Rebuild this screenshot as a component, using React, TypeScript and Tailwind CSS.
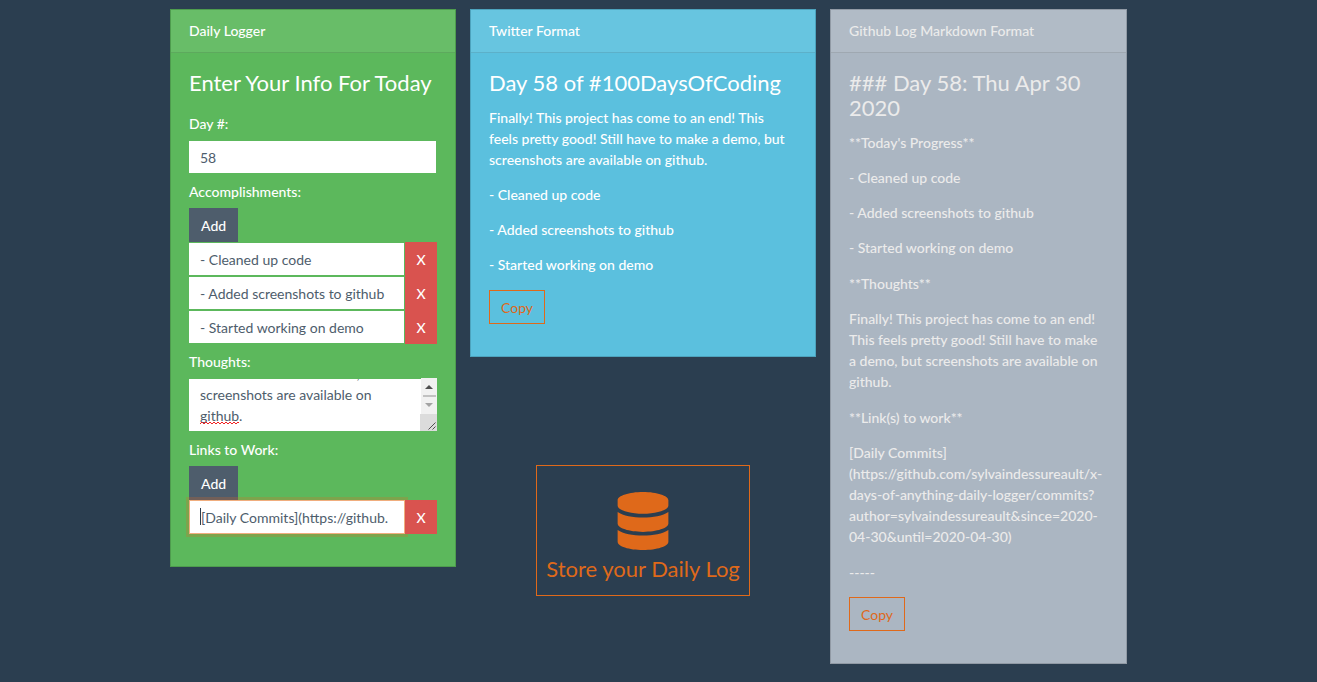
import { useEffect, useRef, useState } from "react";
import type { ReactNode } from "react";
import { FaDatabase } from "react-icons/fa";

const accomplishments = [
  "- Cleaned up code",
  "- Added screenshots to github",
  "- Started working on demo",
];

const initialThoughts =
  "Finally! This project has come to an end! This feels pretty good! Still have to make a demo, but screenshots are available on github.";

const link =
  "[Daily Commits](https://github.com/sylvaindessureault/x-days-of-anything-daily-logger/commits?author=sylvaindessureault&since=2020-04-30&until=2020-04-30)";

function Card({
  title,
  className,
  children,
}: {
  title: string;
  className: string;
  children: ReactNode;
}) {
  return (
    <section className={`border border-black/15 bg-clip-border ${className}`}>
      <header className="border-b border-black/10 bg-white/8 px-[18px] pt-[10px] pb-[11px]">
        {title}
      </header>
      <div className="px-[18px] pt-[17px] pb-8">{children}</div>
    </section>
  );
}

function CopyButton() {
  return (
    <button
      type="button"
      className="h-[34px] border border-[#df691a] px-[11px] font-normal text-[#df691a]"
    >
      Copy
    </button>
  );
}

function AddButton({ label }: { label: string }) {
  return (
    <button
      type="button"
      aria-label={label}
      className="block h-[34px] bg-[#4e5d6c] px-3"
    >
      Add
    </button>
  );
}

function RemoveButton() {
  return (
    <button type="button" className="h-[34px] w-8 bg-[#d9534f]">
      X
    </button>
  );
}

function ThoughtsBox() {
  const [value, setValue] = useState(initialThoughts);
  const box = useRef<HTMLTextAreaElement>(null);

  useEffect(() => {
    if (box.current) box.current.scrollTop = box.current.scrollHeight;
  }, []);

  return (
    <div className="relative">
      <textarea
        id="thoughts"
        ref={box}
        value={value}
        onChange={(e) => setValue(e.target.value)}
        className="block h-[54px] w-full resize-none overflow-hidden border-y border-transparent bg-white bg-clip-padding py-[5px] pr-7 pl-[11px] font-normal text-[#4e5d6c] outline-none"
      />
      <svg
        className="absolute top-[43px] left-[11px]"
        width="41"
        height="4"
        viewBox="0 0 41 4"
        fill="none"
        stroke="#f02020"
        aria-hidden="true"
      >
        <path d="M0 3l2-2 2 2 2-2 2 2 2-2 2 2 2-2 2 2 2-2 2 2 2-2 2 2 2-2 2 2 2-2 2 2 2-2 2 2 2-2 1 1" />
      </svg>
      <svg
        className="absolute top-0 right-0"
        width="17"
        height="53"
        viewBox="0 0 17 53"
        aria-hidden="true"
      >
        <path fill="#f1f1f1" d="M1 0h16v36H1z" />
        <path fill="#dcdcdc" d="M0 36h17v17H0z" />
        <path fill="#505050" d="M5 11l4-4 4 4z" />
        <path fill="#c1c1c1" d="M3 17h13v2H3z" />
        <path fill="#a3a3a3" d="M5 25h8l-4 4z" />
        <path stroke="#505050" d="M8.500 51.500l7-7M12.500 51.500l3-3" />
      </svg>
    </div>
  );
}

const inputLook =
  "h-[34px] min-w-0 bg-white pl-[11px] pr-4 font-normal text-[#4e5d6c] outline-none bg-clip-padding";

export default function App() {
  const [day, setDay] = useState("58");
  const [items, setItems] = useState(accomplishments);
  const [work, setWork] = useState(link);

  return (
    <div className="min-h-screen bg-[#2b3e50] pt-[9px] pr-5 pb-[18px] font-['Lato',sans-serif] text-[14px] leading-[21px] font-medium text-white">
      <main className="mx-auto grid max-w-[957px] grid-cols-[286fr_346fr_297fr] items-start gap-[14px]">
        <Card title="Daily Logger" className="bg-[#5cb85c]">
          <h4 className="mb-[18px] text-[22px] leading-[25px] font-normal">
            Enter Your Info For Today
          </h4>
          <div className="mb-[7px]">
            <label htmlFor="day" className="mb-[6px] block">
              Day #:
            </label>
            <input
              id="day"
              value={day}
              onChange={(e) => setDay(e.target.value)}
              className={`block w-full border-y border-r border-transparent ${inputLook}`}
            />
          </div>
          <div className="mb-[7px]">
            <label htmlFor="item-0" className="mb-[6px] block">
              Accomplishments:
            </label>
            <AddButton label="Add accomplishment" />
            {items.map((item, i) => (
              <div key={i} className="flex">
                <input
                  id={`item-${i}`}
                  aria-label={`Accomplishment ${i + 1}`}
                  value={item}
                  onChange={(e) =>
                    setItems(items.map((v, j) => (j === i ? e.target.value : v)))
                  }
                  className={`flex-1 border-y border-r border-transparent ${inputLook}`}
                />
                <RemoveButton />
              </div>
            ))}
          </div>
          <div className="mb-[7px]">
            <label htmlFor="thoughts" className="mb-[6px] block">
              Thoughts:
            </label>
            <ThoughtsBox />
          </div>
          <div>
            <label htmlFor="link" className="mb-[6px] block">
              Links to Work:
            </label>
            <AddButton label="Add link" />
            <div className="relative flex">
              <input
                id="link"
                value={work}
                onChange={(e) => setWork(e.target.value)}
                className={`flex-1 border border-[#f0ad7d] shadow-[0_0_0_3px_rgba(223,105,26,0.25)] ${inputLook}`}
              />
              <span className="absolute top-2 left-[11px] h-[17px] w-px bg-[#2b3e50]" />
              <div className="relative flex">
                <RemoveButton />
              </div>
            </div>
          </div>
        </Card>

        <div>
          <Card title="Twitter Format" className="bg-[#5bc0de]">
            <h4 className="mb-3 text-[22px] leading-[25px] font-normal">
              Day 58 of #100DaysOfCoding
            </h4>
            <div className="mb-[15px] flex flex-col gap-[14px] pr-1">
              <p>{initialThoughts}</p>
              {accomplishments.map((item) => (
                <p key={item}>{item}</p>
              ))}
            </div>
            <CopyButton />
          </Card>
          <div className="mt-[108px] flex justify-center">
            <button
              type="button"
              className="flex flex-col items-center border border-[#df691a] px-[9px] pt-[26px] pb-[14px] text-[22px] leading-[25px] font-normal text-[#df691a]"
            >
              <FaDatabase className="mb-[6px] size-[58px]" aria-hidden="true" />
              Store your Daily Log
            </button>
          </div>
        </div>

        <Card
          title="Github Log Markdown Format"
          className="bg-[#abb6c2] text-[#ebebeb]"
        >
          <h4 className="mb-3 text-[22px] leading-[25px] font-normal">
            ### Day 58: Thu Apr 30 2020
          </h4>
          <div className="mb-[14px] flex flex-col gap-[15px] pr-1">
            <div className="flex flex-col gap-[14px]">
              <p>**Today's Progress**</p>
              {accomplishments.map((item) => (
                <p key={item}>{item}</p>
              ))}
            </div>
            <div className="flex flex-col gap-[14px]">
              <p>**Thoughts**</p>
              <p>{initialThoughts}</p>
            </div>
            <div className="flex flex-col gap-[14px]">
              <p>**Link(s) to work**</p>
              <p>{link}</p>
            </div>
            <p>-----</p>
          </div>
          <CopyButton />
        </Card>
      </main>
    </div>
  );
}
